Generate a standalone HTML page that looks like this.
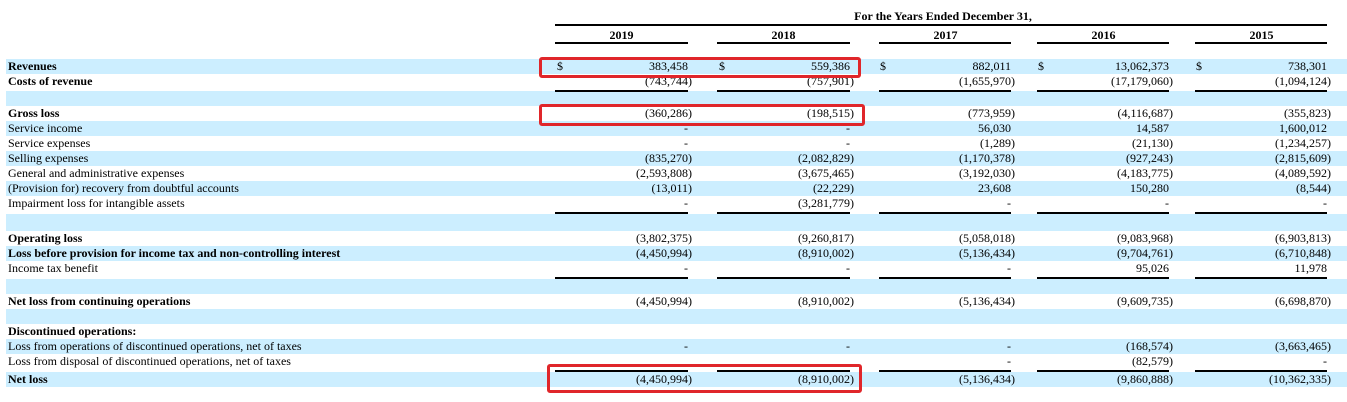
<!DOCTYPE html>
<html><head><meta charset="utf-8"><style>
body{margin:0;width:1347px;height:402px;background:#fff;position:relative;overflow:hidden;font-family:"Liberation Serif",serif;font-size:12px;color:#000}
.r{position:absolute;left:6px;right:0;height:15px;line-height:15px}
.b{background:#cceeff}
.r .l{position:absolute;left:2px;white-space:nowrap}
.bd{font-weight:bold}
.c{position:absolute;white-space:nowrap}
.c1{right:655px}.c2{right:493px}.c3{right:332px}.c4{right:174px}.c5{right:16px}
.p{padding-right:4px}
.d{position:absolute}
.d1{left:551px}.d2{left:713px}.d3{left:874px}.d4{left:1032px}.d5{left:1190px}
.ln{position:absolute;height:2px;background:#000}
.red{position:absolute;border:3px solid #e0262a;border-radius:3px}
.h{position:absolute;font-weight:bold;line-height:15px;text-align:center;width:133px}
</style></head><body>
<div class="h" style="left:843px;top:9px;width:200px">For the Years Ended December 31,</div>
<div class="ln" style="left:555px;width:772px;top:24px"></div>
<div class="h" style="left:555px;top:28px">2019</div>
<div class="h" style="left:717px;top:28px">2018</div>
<div class="h" style="left:879px;top:28px">2017</div>
<div class="h" style="left:1037px;top:28px">2016</div>
<div class="h" style="left:1195px;top:28px">2015</div>

<div class="r b" style="top:59px"><span class="l bd">Revenues</span><span class="d d1">$</span><span class="c c1 p">383,458</span><span class="d d2">$</span><span class="c c2 p">559,386</span><span class="d d3">$</span><span class="c c3 p">882,011</span><span class="d d4">$</span><span class="c c4 p">13,062,373</span><span class="d d5">$</span><span class="c c5 p">738,301</span></div>
<div class="r" style="top:74px"><span class="l bd">Costs of revenue</span><span class="c c1">(743,744)</span><span class="c c2">(757,901)</span><span class="c c3">(1,655,970)</span><span class="c c4">(17,179,060)</span><span class="c c5">(1,094,124)</span></div>
<div class="r b" style="top:91px;height:15px"></div>
<div class="r" style="top:106px"><span class="l bd">Gross loss</span><span class="c c1">(360,286)</span><span class="c c2">(198,515)</span><span class="c c3">(773,959)</span><span class="c c4">(4,116,687)</span><span class="c c5">(355,823)</span></div>
<div class="r b" style="top:121px"><span class="l">Service income</span><span class="c c1 p">-</span><span class="c c2 p">-</span><span class="c c3 p">56,030</span><span class="c c4 p">14,587</span><span class="c c5 p">1,600,012</span></div>
<div class="r" style="top:136px"><span class="l">Service expenses</span><span class="c c1 p">-</span><span class="c c2 p">-</span><span class="c c3">(1,289)</span><span class="c c4">(21,130)</span><span class="c c5">(1,234,257)</span></div>
<div class="r b" style="top:151px"><span class="l">Selling expenses</span><span class="c c1">(835,270)</span><span class="c c2">(2,082,829)</span><span class="c c3">(1,170,378)</span><span class="c c4">(927,243)</span><span class="c c5">(2,815,609)</span></div>
<div class="r" style="top:166px"><span class="l">General and administrative expenses</span><span class="c c1">(2,593,808)</span><span class="c c2">(3,675,465)</span><span class="c c3">(3,192,030)</span><span class="c c4">(4,183,775)</span><span class="c c5">(4,089,592)</span></div>
<div class="r b" style="top:181px"><span class="l">(Provision for) recovery from doubtful accounts</span><span class="c c1">(13,011)</span><span class="c c2">(22,229)</span><span class="c c3 p">23,608</span><span class="c c4 p">150,280</span><span class="c c5">(8,544)</span></div>
<div class="r" style="top:196px"><span class="l">Impairment loss for intangible assets</span><span class="c c1 p">-</span><span class="c c2">(3,281,779)</span><span class="c c3 p">-</span><span class="c c4 p">-</span><span class="c c5 p">-</span></div>
<div class="r b" style="top:214px;height:17px"></div>
<div class="r" style="top:231px"><span class="l bd">Operating loss</span><span class="c c1">(3,802,375)</span><span class="c c2">(9,260,817)</span><span class="c c3">(5,058,018)</span><span class="c c4">(9,083,968)</span><span class="c c5">(6,903,813)</span></div>
<div class="r b" style="top:246px"><span class="l bd">Loss before provision for income tax and non-controlling interest</span><span class="c c1">(4,450,994)</span><span class="c c2">(8,910,002)</span><span class="c c3">(5,136,434)</span><span class="c c4">(9,704,761)</span><span class="c c5">(6,710,848)</span></div>
<div class="r" style="top:261px"><span class="l">Income tax benefit</span><span class="c c1 p">-</span><span class="c c2 p">-</span><span class="c c3 p">-</span><span class="c c4 p">95,026</span><span class="c c5 p">11,978</span></div>
<div class="r b" style="top:279px;height:15px"></div>
<div class="r" style="top:294px"><span class="l bd">Net loss from continuing operations</span><span class="c c1">(4,450,994)</span><span class="c c2">(8,910,002)</span><span class="c c3">(5,136,434)</span><span class="c c4">(9,609,735)</span><span class="c c5">(6,698,870)</span></div>
<div class="r b" style="top:309px"></div>
<div class="r" style="top:324px"><span class="l bd">Discontinued operations:</span></div>
<div class="r b" style="top:339px"><span class="l">Loss from operations of discontinued operations, net of taxes</span><span class="c c1 p">-</span><span class="c c2 p">-</span><span class="c c3 p">-</span><span class="c c4">(168,574)</span><span class="c c5">(3,663,465)</span></div>
<div class="r" style="top:354px"><span class="l">Loss from disposal of discontinued operations, net of taxes</span><span class="c c3 p">-</span><span class="c c4">(82,579)</span><span class="c c5 p">-</span></div>
<div class="r b" style="top:372px"><span class="l bd">Net loss</span><span class="c c1">(4,450,994)</span><span class="c c2">(8,910,002)</span><span class="c c3">(5,136,434)</span><span class="c c4">(9,860,888)</span><span class="c c5">(10,362,335)</span></div>

<!-- column lines -->
<div class="ln" style="left:555px;width:133px;top:42px"></div><div class="ln" style="left:717px;width:133px;top:42px"></div><div class="ln" style="left:879px;width:132px;top:42px"></div><div class="ln" style="left:1037px;width:132px;top:42px"></div><div class="ln" style="left:1195px;width:132px;top:42px"></div>
<div class="ln" style="left:555px;width:133px;top:90px"></div><div class="ln" style="left:717px;width:133px;top:90px"></div><div class="ln" style="left:879px;width:132px;top:90px"></div><div class="ln" style="left:1037px;width:132px;top:90px"></div><div class="ln" style="left:1195px;width:132px;top:90px"></div>
<div class="ln" style="left:555px;width:133px;top:212px"></div><div class="ln" style="left:717px;width:133px;top:212px"></div><div class="ln" style="left:879px;width:132px;top:212px"></div><div class="ln" style="left:1037px;width:132px;top:212px"></div><div class="ln" style="left:1195px;width:132px;top:212px"></div>
<div class="ln" style="left:555px;width:133px;top:277px"></div><div class="ln" style="left:717px;width:133px;top:277px"></div><div class="ln" style="left:879px;width:132px;top:277px"></div><div class="ln" style="left:1037px;width:132px;top:277px"></div><div class="ln" style="left:1195px;width:132px;top:277px"></div>
<div class="ln" style="left:555px;width:133px;top:370px"></div><div class="ln" style="left:717px;width:133px;top:370px"></div><div class="ln" style="left:879px;width:132px;top:370px"></div><div class="ln" style="left:1037px;width:132px;top:370px"></div><div class="ln" style="left:1195px;width:132px;top:370px"></div>

<div class="red" style="left:539px;top:57px;width:316px;height:15px"></div>
<div class="red" style="left:539px;top:104px;width:320px;height:16px"></div>
<div class="red" style="left:547px;top:364px;width:309px;height:23px"></div>
</body></html>
